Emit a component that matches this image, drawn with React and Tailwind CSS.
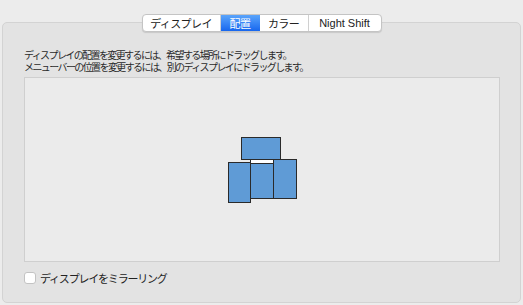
import React from "react";

const jp = { fontFamily: '"Noto Sans CJK JP", "Noto Sans", sans-serif' };

function Display({ className, menu }) {
  return (
    <div className={`absolute bg-[#5f9bd6] border border-[#2a2a2a] ${className}`}>
      {menu && <div className="h-[4px] bg-white border-b border-[#2a2a2a]" />}
    </div>
  );
}

export default function App() {
  return (
    <div
      className="w-[523px] h-[305px] bg-[#ececec] pt-[22px] px-[2px] overflow-hidden"
      style={jp}
    >
      <div className="h-[281px] bg-[#e3e3e3] border border-[#d3d3d3] rounded-[5px] flex flex-col">
        <div className="flex justify-center -mt-[9px]">
          <div className="flex h-[18px] rounded-[4px] bg-white border border-[#c4c4c4] shadow-[0_1px_1px_rgba(0,0,0,0.12)] text-[11px] text-[#222] leading-none overflow-hidden">
            <div className="w-[78px] flex items-center justify-center border-r border-[#d0d0d0] tracking-[-0.6px]">ディスプレイ</div>
            <div className="w-[39px] flex items-center justify-center bg-gradient-to-b from-[#5aa4fb] to-[#1666ee] text-white tracking-[-0.6px]">配置</div>
            <div className="w-[49px] flex items-center justify-center border-r border-[#d0d0d0] tracking-[-0.6px]">カラー</div>
            <div className="w-[72px] flex items-center justify-center" style={{ fontFamily: '"Liberation Sans", Arial, sans-serif' }}>Night Shift</div>
          </div>
        </div>
        <div className="pl-[21px] pt-[17px] text-[10px] leading-[12px] text-[#2a2a2a] tracking-[-1.6px]">
          <div>ディスプレイの配置を変更するには、希望する場所にドラッグします。</div>
          <div>メニューバーの位置を変更するには、別のディスプレイにドラッグします。</div>
        </div>
        <div className="ml-[21px] mt-[4px] w-[476px] h-[185px] bg-[#ebebeb] border border-[#cfcfcf] relative">
          <Display className="left-[216px] top-[59px] w-[40px] h-[23px]" />
          <Display className="left-[203px] top-[84px] w-[23px] h-[41px]" />
          <Display className="left-[225px] top-[81px] w-[24px] h-[40px]" menu />
          <Display className="left-[248px] top-[81px] w-[24px] h-[40px]" />
        </div>
        <div className="flex items-center ml-[21px] mt-[10px] gap-[4px]">
          <div className="w-[12px] h-[12px] bg-white border border-[#c3c3c3] rounded-[3px]" />
          <span className="text-[11px] text-[#222] tracking-[-1.2px] leading-none">ディスプレイをミラーリング</span>
        </div>
      </div>
    </div>
  );
}
